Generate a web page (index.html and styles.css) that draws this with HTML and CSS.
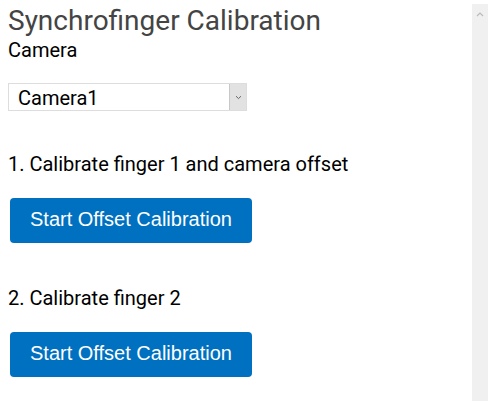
FILE: index.html
```html
<!DOCTYPE html>
<html>
<head>
<meta charset="utf-8">
<link rel="stylesheet" href="styles.css">
</head>
<body>
<div class="frame">
  <main class="content">
    <h1 class="title">Synchrofinger Calibration</h1>
    <div class="label">Camera</div>
    <div class="select">
      <span class="select-value">Camera1</span>
      <span class="select-btn">
        <svg width="7" height="5" viewBox="0 0 7 5"><path d="M1 1.2 L3.5 3.6 L6 1.2" fill="none" stroke="#666" stroke-width="1"/></svg>
      </span>
    </div>
    <div class="step">1. Calibrate finger 1 and camera offset</div>
    <button class="btn">Start Offset Calibration</button>
    <div class="step step2">2. Calibrate finger 2</div>
    <button class="btn">Start Offset Calibration</button>
  </main>
  <div class="scrollbar">
    <svg class="arrow" width="8" height="5" viewBox="0 0 8 5"><path d="M1 4 L4 1 L7 4" fill="none" stroke="#bbb" stroke-width="1.2"/></svg>
  </div>
</div>
</body>
</html>
```
FILE: styles.css
```css
html, body {
  margin: 0;
  padding: 0;
  background: #fff;
  height: 100%;
  overflow: hidden;
}
.frame {
  display: flex;
  height: 401px;
  padding-right: 8px;
  box-sizing: border-box;
}
.content {
  flex: 1;
  padding-left: 8px;
  font-family: Roboto, "Liberation Sans", sans-serif;
  color: #000;
}
.title {
  margin: 0;
  padding-top: 5px;
  font-size: 28px;
  font-weight: 400;
  line-height: 32px;
  color: #444;
}
.label {
  font-size: 20px;
  line-height: 24px;
  margin-top: 1px;
}
.select {
  margin-top: 21px;
  width: 239px;
  height: 28px;
  box-sizing: border-box;
  border: 1px solid #ddd;
  display: flex;
  align-items: stretch;
}
.select-value {
  flex: 1;
  padding: 1px 0 0 9px;
  font-size: 20px;
  line-height: 26px;
}
.select-btn {
  width: 16px;
  background: #e2e2e2;
  border-left: 1px solid #c8c8c8;
  display: flex;
  align-items: center;
  justify-content: center;
}
.step {
  font-size: 20px;
  line-height: 24px;
  margin-top: 41px;
}
.step2 {
  margin-top: 43px;
}
.btn {
  display: block;
  margin: 22px 0 0 2px;
  width: 242px;
  height: 45px;
  border: none;
  border-radius: 4px;
  background: #0070c0;
  color: #fff;
  font-family: "Liberation Sans", Arial, sans-serif;
  font-size: 20px;
  padding: 0 0 2px 0;
}
.scrollbar {
  width: 16px;
  margin-top: 4px;
  background: #f0f0f0;
  display: flex;
  justify-content: center;
  padding-top: 8px;
  box-sizing: border-box;
}
.arrow {
  display: block;
}
```
